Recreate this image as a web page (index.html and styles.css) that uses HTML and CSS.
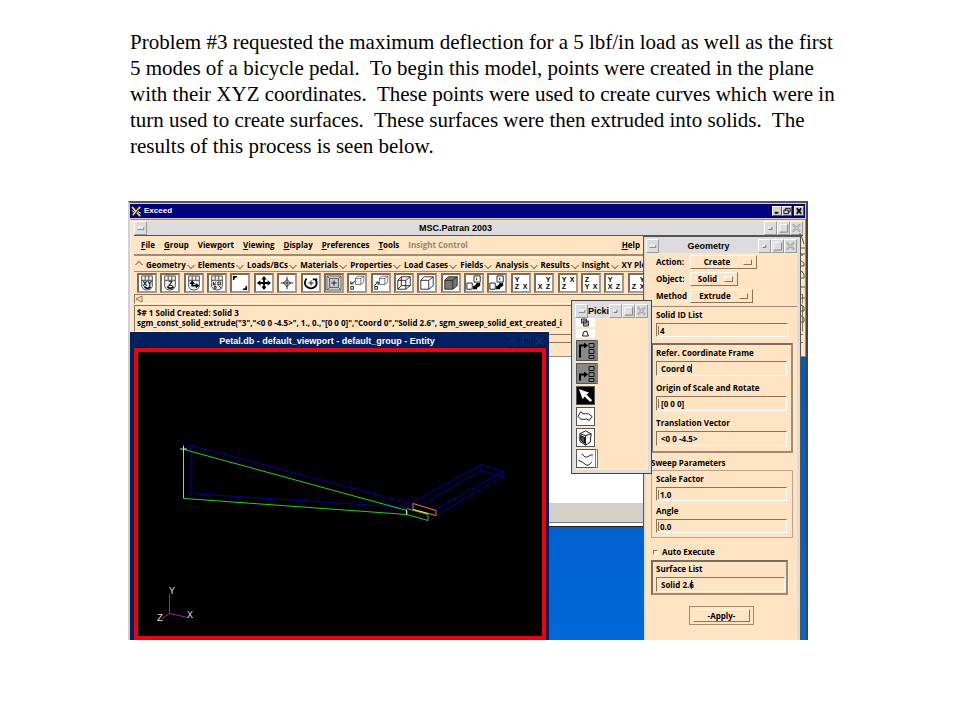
FILE: index.html
```
<!DOCTYPE html>
<html lang="en">
<head>
    <meta charset="UTF-8">
    <meta name="viewport" content="width=device-width, initial-scale=1.0">
    <title>Problem #3</title>
    <link rel="stylesheet" href="styles.css">
</head>
<body>
    <!-- shared icon shapes -->
    <svg class="defs" aria-hidden="true">
        <symbol id="mouse" viewBox="0 0 18 18">
            <path d="M3 1V13Q4 17 9 17T15 13V1ZM3 6H15M7 1V6M11 1V6" fill="#eee" stroke="#444"/>
        </symbol>
        <symbol id="cube" viewBox="0 0 18 18">
            <path d="M2 6H11V16H2ZM2 6L6 2H16L11 6M16 2V12L11 16" fill="none" stroke="#222"/>
        </symbol>
        <symbol id="min" viewBox="0 0 12 12"><path d="M3 7H9V5H3" fill="none" stroke="#fff"/><path d="M3 7.5H9.5V5" fill="none" stroke="#777"/></symbol>
        <symbol id="dot" viewBox="0 0 12 12"><path d="M4 7V5H7" fill="none" stroke="#fff"/><path d="M4 7.5H7.5V5" fill="none" stroke="#666"/></symbol>
        <symbol id="box" viewBox="0 0 12 12"><path d="M2 10V2H10" fill="none" stroke="#fff"/><path d="M2 10.5H10.5V2" fill="none" stroke="#777"/></symbol>
        <symbol id="close" viewBox="0 0 12 12"><path d="M2 2L10 10M10 2L2 10" fill="none" stroke="#777" stroke-width="2"/><path d="M2 2L10 10M10 2L2 10" fill="none" stroke="#fff"/></symbol>
    </svg>

    <p class="intro">Problem #3 requested the maximum deflection for a 5 lbf/in load as well as the first<br>
    5 modes of a bicycle pedal.&nbsp; To begin this model, points were created in the plane<br>
    with their XYZ coordinates.&nbsp; These points were used to create curves which were in<br>
    turn used to create surfaces.&nbsp; These surfaces were then extruded into solids.&nbsp; The<br>
    results of this process is seen below.</p>

    <div class="exceed">
        <div class="exceed-title">
            <svg class="logo" viewBox="0 0 12 12"><path d="M1 1L10 11M10 1L2 10" stroke="#e8d820" stroke-width="2"/><path d="M1 5L4 7M6 5L11 8" stroke="#fff"/><path d="M4 10L8 4" stroke="#111"/></svg>
            <span>Exceed</span>
            <button class="win-btn" aria-label="Minimize"><svg viewBox="0 0 9 8"><path d="M2 6H6" stroke="#000" stroke-width="2"/></svg></button>
            <button class="win-btn" aria-label="Restore"><svg viewBox="0 0 9 8"><path d="M3 3V1H8V5H6M1 3H6V7H1Z" fill="none" stroke="#000"/></svg></button>
            <button class="win-btn last" aria-label="Close"><svg viewBox="0 0 9 8"><path d="M2 1L7 7M7 1L2 7" stroke="#000" stroke-width="2"/></svg></button>
        </div>

        <div class="desktop">
            <div class="window blank"><div class="blank-foot"></div></div>

            <div class="window patran">
                <div class="title-bar">
                    <button aria-label="Window menu"><svg><use href="#min"/></svg></button>
                    <span>MSC.Patran 2003</span>
                    <button aria-label="Iconify"><svg><use href="#dot"/></svg></button>
                    <button aria-label="Maximize"><svg><use href="#box"/></svg></button>
                    <button aria-label="Close"><svg><use href="#close"/></svg></button>
                </div>
                <nav class="menu">
                    <a href="#"><u>F</u>ile</a>
                    <a href="#"><u>G</u>roup</a>
                    <a href="#">View<u>p</u>ort</a>
                    <a href="#"><u>V</u>iewing</a>
                    <a href="#"><u>D</u>isplay</a>
                    <a href="#"><u>P</u>references</a>
                    <a href="#"><u>T</u>ools</a>
                    <a href="#" class="off">Insight Control</a>
                    <a href="#" class="help"><u>H</u>elp</a>
                </nav>
                <div class="tabs">
                    <button class="tab up">Geometry</button>
                    <button class="tab">Elements</button>
                    <button class="tab">Loads/BCs</button>
                    <button class="tab">Materials</button>
                    <button class="tab">Properties</button>
                    <button class="tab">Load Cases</button>
                    <button class="tab">Fields</button>
                    <button class="tab">Analysis</button>
                    <button class="tab">Results</button>
                    <button class="tab">Insight</button>
                    <button class="tab">XY Plot</button>
                </div>
                <div class="tools">
                    <button aria-label="Rotate XY"><svg viewBox="0 0 18 18"><use href="#mouse"/><text x="4" y="12">XY</text><path d="M6 13Q9 17 13 13" class="thick"/></svg></button>
                    <button aria-label="Rotate Z"><svg viewBox="0 0 18 18"><use href="#mouse"/><text x="7" y="12">Z</text><path d="M6 13Q9 17 13 13" class="thick"/></svg></button>
                    <button aria-label="Pan"><svg viewBox="0 0 18 18"><use href="#mouse"/><path d="M7 8V12H12" class="thick"/><path d="M4 10L7 6L10 10ZM11 9L15 12L11 15Z" class="solid"/></svg></button>
                    <button aria-label="Mouse zoom"><svg viewBox="0 0 18 18"><use href="#mouse"/><path d="M5 11L8 8M5 8V11H8M13 8H10V11H13ZM6 13H8V15H6ZM11 12L14 15" class="line"/></svg></button>
                    <button aria-label="Fit view"><svg viewBox="0 0 18 18"><path d="M1 6V1H6L5 3H3V5ZM17 12V17H12L13 15H15V13Z" class="solid"/></svg></button>
                    <button aria-label="Move"><svg viewBox="0 0 18 18"><path d="M9 1L12 5H10V8H13V6L17 9L13 12V10H10V13H12L9 17L6 13H8V10H5V12L1 9L5 6V8H8V5H6Z" class="solid"/></svg></button>
                    <button aria-label="Center"><svg viewBox="0 0 18 18"><path d="M9 2V16M2 9H16M9 5L13 9L9 13L5 9Z" class="line"/></svg></button>
                    <button aria-label="Rotate"><svg viewBox="0 0 18 18"><path d="M4 4Q0 9 4 13Q9 17 14 13Q17 9 14 5M11 5H15V9" class="thick"/><path d="M9 6V12M6 9H12" class="line"/></svg></button>
                    <button aria-label="Zoom box"><svg viewBox="0 0 18 18"><path d="M1 1H17V17H1ZM4 4H14V14H4Z" fill="#ccc" stroke="#555"/><path d="M1 1L4 4M17 1L14 4M1 17L4 14M17 17L14 14" stroke="#555"/><path d="M9 6V12M6 9H12" class="line"/></svg></button>
                    <button aria-label="Zoom out"><svg viewBox="0 0 18 18"><use href="#cube" x="6" y="0" width="12" height="12"/><path d="M7 7L2 10M2 7V10H5M2 13H5V16H2Z" class="line"/></svg></button>
                    <button aria-label="Zoom in"><svg viewBox="0 0 18 18"><use href="#cube" x="6" y="0" width="12" height="12"/><path d="M1 12L6 8M3 8H6V11M2 13H5V16H2Z" class="line"/></svg></button>
                    <button aria-label="Wireframe"><svg viewBox="0 0 18 18"><use href="#cube"/><path d="M6 2V12H16M6 12L2 16" class="line"/></svg></button>
                    <button aria-label="Hidden line"><svg viewBox="0 0 18 18"><use href="#cube"/></svg></button>
                    <button aria-label="Shaded"><svg viewBox="0 0 18 18"><path d="M2 6L6 2H16V12L11 16H2Z" fill="#777"/><use href="#cube"/></svg></button>
                    <button aria-label="Show labels"><svg viewBox="0 0 18 18"><path d="M1 9H7V16H1ZM9 1H16V8H9ZM12 3V6" class="line"/><path d="M8 16V12L10 12L12 9H16V12L13 14L12 16Z" class="solid"/></svg></button>
                    <button aria-label="Hide labels"><svg viewBox="0 0 18 18"><path d="M1 9H7V16H1ZM9 1H16V8H9ZM12 3V6" class="line"/><path d="M8 16V12L10 12L12 9H16V12L13 14L12 16Z" class="solid"/></svg></button>
                    <button aria-label="Front view"><svg viewBox="0 0 18 18"><text x="2" y="8">Y</text><text x="2" y="16">Z</text><text x="11" y="16">X</text></svg></button>
                    <button aria-label="Rear view"><svg viewBox="0 0 18 18"><text x="11" y="8">Y</text><text x="2" y="16">X</text><text x="11" y="16">Z</text></svg></button>
                    <button aria-label="Top view"><svg viewBox="0 0 18 18"><text x="2" y="8">Y</text><text x="11" y="8">X</text><text x="2" y="16">Z</text></svg></button>
                    <button aria-label="Bottom view"><svg viewBox="0 0 18 18"><text x="2" y="8">Z</text><text x="2" y="16">Y</text><text x="11" y="16">X</text></svg></button>
                    <button aria-label="Left view"><svg viewBox="0 0 18 18"><text x="2" y="8">Y</text><text x="2" y="16">X</text><text x="11" y="16">Z</text></svg></button>
                    <button aria-label="Right view"><svg viewBox="0 0 18 18"><text x="11" y="8">Y</text><text x="2" y="16">Z</text><text x="11" y="16">X</text></svg></button>
                </div>
                <div class="scroll"><svg viewBox="0 0 8 8"><path d="M7 1L1 4L7 7Z" fill="#ffe4c4" stroke="#8b7355"/></svg></div>
                <div class="history">$# 1 Solid Created: Solid 3<br>sgm_const_solid_extrude("3","&lt;0 0 -4.5&gt;", 1., 0.,"[0 0 0]","Coord 0","Solid 2.6", sgm_sweep_solid_ext_created_i</div>
                <div class="command"></div>
                <svg class="edge" viewBox="0 0 6 110"><path d="M1 1V16H6M2 3L5 12M0 22H6M1 28L5 31V34H1V38L5 42V46H0M0 55H6M0 66H6M1 72L5 75V79H1V83L5 86V90H0" fill="none" stroke="#5c5246"/></svg>
            </div>

            <div class="window viewport">
                <div class="title-bar dark">
                    <button aria-label="Window menu"></button>
                    <span>Petal.db - default_viewport - default_group - Entity</span>
                    <button aria-label="Iconify"><svg><use href="#dot"/></svg></button>
                    <button aria-label="Maximize"><svg><use href="#box"/></svg></button>
                    <button aria-label="Close"><svg><use href="#close"/></svg></button>
                </div>
                <svg class="model" viewBox="138 352 404 283" fill="none">
                    <g stroke="#0000a8">
                        <path d="M184 448L191 445L410 503M191 445V493L184 498M191 493L407 507"/>
                        <path d="M410 503L481 464L503 471V476L436 515M413 509L481 470L503 476M481 464V470M503 471L433 510M407 507L413 503"/>
                    </g>
                    <path d="M183.500 448V498" stroke="#c8c060"/>
                    <path d="M184 449L407 510V514L184 498M407 514L428 520V514L407 508" stroke="#20d020"/>
                    <path d="M413 503L436 510V515L413 509Z" stroke="#f08030"/>
                    <path d="M413 509L428 513" stroke="#e8e020"/>
                    <path d="M180 448.500H187M183.500 445V452M406.500 509V514" stroke="#a8e8e8"/>
                    <path d="M169.500 593V613L188 617M169.500 613L162 618" stroke="#a020a0"/>
                    <g class="axis">
                        <text x="169" y="593">Y</text>
                        <text x="187" y="617">X</text>
                        <text x="157" y="620">Z</text>
                    </g>
                </svg>
            </div>

            <form class="window geometry">
                <div class="title-bar">
                    <button type="button" aria-label="Window menu"><svg><use href="#min"/></svg></button>
                    <span>Geometry</span>
                    <button type="button" aria-label="Iconify"><svg><use href="#dot"/></svg></button>
                    <button type="button" aria-label="Maximize"><svg><use href="#box"/></svg></button>
                    <button type="button" aria-label="Close"><svg><use href="#close"/></svg></button>
                </div>
                <div class="options">
                    <label for="action">Action:</label>
                    <div class="option create"><select id="action"><option>Create</option></select></div>
                    <label for="object">Object:</label>
                    <div class="option solid-opt"><select id="object"><option>Solid</option></select></div>
                    <label for="method">Method</label>
                    <div class="option extrude"><select id="method"><option>Extrude</option></select></div>
                </div>
                <div class="field id-list">
                    <label for="solid-id">Solid ID List</label>
                    <input type="text" id="solid-id" class="caret" value="4">
                </div>
                <div class="frame">
                    <div class="field">
                        <label for="coord">Refer. Coordinate Frame</label>
                        <input type="text" id="coord" class="inset caret-end" value="Coord 0">
                    </div>
                    <div class="field">
                        <label for="origin">Origin of Scale and Rotate</label>
                        <input type="text" id="origin" class="inset caret" value="[0 0 0]">
                    </div>
                    <div class="field">
                        <label for="vector">Translation Vector</label>
                        <input type="text" id="vector" class="inset" value="&lt;0 0 -4.5&gt;">
                    </div>
                </div>
                <div class="heading">Sweep Parameters</div>
                <div class="frame thin">
                    <div class="field">
                        <label for="scale">Scale Factor</label>
                        <input type="text" id="scale" class="caret" value="1.0">
                    </div>
                    <div class="field">
                        <label for="angle">Angle</label>
                        <input type="text" id="angle" class="caret" value="0.0">
                    </div>
                </div>
                <label class="check"><input type="checkbox">Auto Execute</label>
                <div class="frame surface">
                    <div class="field">
                        <label for="surface">Surface List</label>
                        <input type="text" id="surface" class="inset caret-end" value="Solid 2.6">
                    </div>
                </div>
                <div class="apply"><button type="button">-Apply-</button></div>
            </form>

            <div class="window picking">
                <div class="title-bar">
                    <button aria-label="Window menu"><svg><use href="#min"/></svg></button>
                    <span>Picki</span>
                    <button aria-label="Iconify"><svg><use href="#dot"/></svg></button>
                    <button aria-label="Maximize"><svg><use href="#box"/></svg></button>
                    <button aria-label="Close"><svg><use href="#close"/></svg></button>
                </div>
                <div class="picks">
                    <button class="small" aria-label="Entire"><svg viewBox="0 0 18 9"><path d="M5 1H10V5H5ZM7 3H12V8H7Z" fill="#aaa" stroke="#333"/></svg></button>
                    <button class="small" aria-label="Polygon"><svg viewBox="0 0 18 9"><path d="M6 7L7 3L10 2L12 7Z" class="line"/></svg></button>
                    <button class="filter" aria-label="Replace"><svg viewBox="0 0 18 18"><path d="M3 16V4H8" class="thick"/><path d="M7 1L11 4L7 7Z" class="solid"/><path d="M12 2H17V6H12ZM12 8H17V12H12ZM12 14H17V17H12Z" class="line"/></svg></button>
                    <button class="filter" aria-label="Append"><svg viewBox="0 0 18 18"><path d="M3 16V10H8" class="thick"/><path d="M7 7L11 10L7 13Z" class="solid"/><path d="M12 2H17V6H12ZM12 8H17V12H12ZM12 14H17V17H12Z" class="line"/></svg></button>
                    <button class="arrow" aria-label="Select"><svg viewBox="0 0 18 18"><path d="M2 2L13 6L10 8L16 14L14 16L8 10L6 13Z" fill="#fff"/></svg></button>
                    <button aria-label="Surface"><svg viewBox="0 0 18 18"><path d="M4 4Q6 7 9 6T16 9L13 13Q10 11 7 12T1 9Z" class="line"/></svg></button>
                    <button aria-label="Solid face"><svg viewBox="0 0 18 18"><path d="M3 5L9 2L15 5L14 14L9 17L3 13ZM3 5L9 7L15 5M9 7V17" class="line"/><path d="M4 7L8 9V15L4 12Z" fill="#555" stroke="#000"/></svg></button>
                    <button class="curve" aria-label="Curve"><svg viewBox="0 0 18 18"><path d="M5 4Q8 9 11 7T16 5M1 11Q5 12 8 15T15 13" class="line"/><path d="M5 4L1 11M16 5L15 13" stroke="#999" stroke-dasharray="1 1"/></svg></button>
                </div>
            </div>
        </div>
    </div>
</body>
</html>
```

FILE: styles.css
```
* {
    box-sizing: border-box;
}

body {
    margin: 0;
    padding: 29px 152px 0 128px;
    background-color: #fff;
    color: #000;
}

.defs {
    display: none;
}

.intro {
    margin: 0 -60px 42px 2px;
    font-family: "Liberation Serif", "Times New Roman", serif;
    font-size: 21px;
    line-height: 26px;
}

button, input, select {
    margin: 0;
    padding: 0;
    border: none;
    border-radius: 0;
    background: none;
    color: inherit;
    font: inherit;
}

button svg {
    display: block;
    width: 100%;
    height: 100%;
}

/* Exceed frame */
.exceed {
    display: flex;
    flex-direction: column;
    height: 439px;
    border-top: 2px solid #555;
    border-left: 2px solid #d4d0c8;
    border-right: 2px solid #444;
    background-color: #d4d0c8;
    font-family: "Open Sans", "Noto Sans", sans-serif;
    font-size: 8px;
    font-weight: bold;
    line-height: 10px;
    overflow: hidden;
}

.exceed-title {
    display: flex;
    align-items: center;
    height: 14px;
    margin: 1px 1px 1px 0;
    padding: 0 1px;
    background-color: #000080;
    color: #fff;
    font-family: "Liberation Sans", Arial, sans-serif;
}

.exceed-title span {
    flex: 1;
    padding-left: 2px;
}

.logo {
    width: 11px;
    height: 11px;
}

.win-btn {
    width: 10px;
    height: 10px;
    border: 1px solid #fff;
    border-right-color: #555;
    border-bottom-color: #555;
    background-color: #d4d0c8;
}

.win-btn.last {
    margin-left: 2px;
}

.desktop {
    position: relative;
    flex: 1;
    background: linear-gradient(#0050b8, #0068d8);
    overflow: hidden;
}

.window {
    position: absolute;
    display: flex;
    flex-direction: column;
    background-color: #ffe4c4;
}

.title-bar {
    display: flex;
    height: 14px;
    background-color: #dcdcdc;
    font-family: "Liberation Sans", Arial, sans-serif;
    font-size: 9px;
    line-height: 14px;
    flex-shrink: 0;
}

.title-bar span {
    flex: 1;
    text-align: center;
    white-space: nowrap;
    overflow: hidden;
}

.title-bar button {
    width: 13px;
    border: 1px solid;
    border-color: #fff #999 #999 #fff;
}

.title-bar.dark {
    background-color: #002060;
    color: #fff;
}

.title-bar.dark button {
    border-color: #002868 #001848 #001848 #002868;
}

.title-bar.dark svg {
    opacity: 0.1;
}

/* white window behind everything */
.blank {
    top: 130px;
    left: 380px;
    right: 160px;
    height: 178px;
    justify-content: flex-end;
    background-color: #fff;
    border-bottom: 1px solid #222;
}

.blank-foot {
    height: 20px;
    margin-bottom: 3px;
    background-color: #d4d0c8;
    border-bottom: 1px solid #777;
}

/* main window */
.patran {
    top: 0;
    left: 0;
    right: 0;
    height: 138px;
    padding: 1px 2px 0 3px;
    border: 1px solid #8c8c8c;
    border-left-color: #eee;
}

.menu {
    display: flex;
    align-items: center;
    gap: 9px;
    height: 21px;
    padding: 0 163px 0 7px;
    border-top: 1px solid #555;
    border-bottom: 2px solid #a08c74;
}

.menu a {
    color: #000;
    text-decoration: none;
    white-space: nowrap;
}

.menu .off {
    color: #94866f;
}

.menu .help {
    margin-left: auto;
}

.tabs {
    display: flex;
    align-items: center;
    justify-content: space-between;
    height: 15px;
    margin-top: 1px;
    padding: 0 153px 0 2px;
    border-top: 1px solid #fff;
    border-bottom: 1px solid #a08c74;
}

.tab {
    display: flex;
    align-items: center;
    gap: 4px;
    white-space: nowrap;
}

.tab::before {
    content: "";
    width: 4px;
    height: 4px;
    border: 1px solid;
    border-color: transparent #8b7355 #8b7355 transparent;
    transform: rotate(45deg);
}

.tab.up::before {
    border-color: #8b7355 transparent transparent #8b7355;
}

.tools {
    display: grid;
    grid-template-columns: repeat(22, 1fr);
    height: 22px;
    padding: 1px 152px 1px 3px;
}

.tools button {
    width: 20px;
    height: 20px;
    border: 2px solid;
    border-color: #776d60 #a99a86 #a99a86 #776d60;
    background-color: #fff;
}

.tools text {
    font-family: "Liberation Sans", Arial, sans-serif;
    font-size: 8px;
    font-weight: bold;
}

.line {
    fill: none;
    stroke: #111;
}

.thick {
    fill: none;
    stroke: #000;
    stroke-width: 2;
}

.solid {
    fill: #000;
}

.scroll {
    height: 10px;
    border: 1px solid #8b7355;
    border-bottom-color: #fff;
}

.scroll svg {
    display: block;
    width: 8px;
    height: 8px;
}

.history {
    height: 27px;
    margin-top: 1px;
    padding: 2px;
    border: 1px solid #8b7355;
    border-bottom-color: #fff;
    line-height: 10px;
    white-space: nowrap;
    overflow: hidden;
}

.command {
    height: 9px;
    margin-top: 2px;
    border-top: 1px solid #8b7355;
    border-bottom: 1px solid #8b7355;
}

.edge {
    position: absolute;
    top: 12px;
    right: 0;
    width: 6px;
    height: 110px;
}

/* model viewport */
.viewport {
    top: 113px;
    left: 0;
    width: 419px;
    bottom: 0;
    padding: 2px 3px 0 4px;
    background-color: #002060;
}

.model {
    flex: 1;
    min-height: 0;
    border: 4px solid #f00008;
    background-color: #000;
}

.axis text {
    fill: #ddd;
    font-family: "Liberation Mono", "Courier New", monospace;
    font-size: 10px;
    font-weight: normal;
}

/* geometry form */
.geometry {
    top: 17px;
    right: 5px;
    width: 158px;
    bottom: 0;
    padding: 2px 3px 0 2px;
    border: 1px solid #555;
    border-bottom: none;
    box-shadow: inset 2px 0 #dcdcdc, inset -3px 0 #dcdcdc, inset 0 2px #dcdcdc;
}

.options {
    display: grid;
    grid-template-columns: 34px 1fr;
    row-gap: 3px;
    padding: 2px 0 3px 10px;
    border-bottom: 1px solid #a08c74;
}

.options label {
    line-height: 14px;
}

.option {
    display: flex;
    align-items: center;
    height: 14px;
    border: 1px solid;
    border-color: #fff #8b7355 #8b7355 #fff;
    padding-right: 4px;
}

.option::after {
    content: "";
    width: 7px;
    height: 4px;
    border: 1px solid;
    border-color: #fff #8b7355 #8b7355 #fff;
}

.option select {
    flex: 1;
    min-width: 0;
    appearance: none;
    text-align: center;
}

.create {
    width: 67px;
}

.solid-opt {
    width: 48px;
}

.extrude {
    width: 63px;
}

.field {
    display: flex;
    flex-direction: column;
    gap: 3px;
}

.field input {
    width: 100%;
    height: 14px;
    padding-left: 3px;
    border: 1px solid;
    border-color: #8b7355 #fff #fff #8b7355;
}

.field .inset {
    height: 15px;
    padding-left: 4px;
}

.field .caret {
    background: linear-gradient(#8b7355, #8b7355) 1px 2px / 1px 9px no-repeat;
}

.field .caret-end {
    background: linear-gradient(#333, #333) 34px 2px / 1px 9px no-repeat;
}

.id-list {
    margin: 3px 9px 6px 10px;
}

.frame {
    display: flex;
    flex-direction: column;
    gap: 7px;
    margin: 0 4px 0 5px;
    padding: 3px 4px 5px 3px;
    border: 2px solid;
    border-color: #776d60 #a08c74 #a08c74 #776d60;
}

.heading {
    margin: 5px 0 2px 5px;
}

.frame.thin {
    gap: 5px;
    padding: 3px 5px 4px 4px;
    border: 1px solid #b8a48a;
}

.check {
    display: flex;
    align-items: center;
    gap: 4px;
    margin: 9px 0 3px 7px;
}

.check input {
    width: 5px;
    height: 5px;
    appearance: none;
    border: 1px solid;
    border-color: #8b7355 #fff #fff #8b7355;
}

.frame.surface {
    margin-right: 9px;
    padding: 2px 1px 1px 3px;
}

.apply {
    align-self: center;
    margin-top: 11px;
    padding: 2px 3px;
    border: 1px solid #a08c74;
}

.apply button {
    width: 57px;
    height: 13px;
    border: 1px solid;
    border-color: #fff #8b7355 #8b7355 #fff;
}

/* picking palette */
.picking {
    top: 81px;
    right: 154px;
    width: 81px;
    height: 174px;
    border: 1px solid #444;
    padding: 3px;
    box-shadow: inset 0 0 0 3px #dcdcdc;
}

.picks {
    display: flex;
    flex-direction: column;
    align-items: flex-start;
    gap: 2px;
    padding-left: 1px;
}

.picks button {
    width: 19px;
    height: 19px;
    border: 1px solid #555;
    background-color: #fff;
}

.picks .small {
    height: 9px;
    border: none;
}

.picks .filter {
    width: 22px;
    height: 21px;
    border-right: 3px double #8b7355;
    background-color: #888;
}

.picks .curve {
    width: 22px;
    border-right: 3px double #8b7355;
}

.picks .arrow {
    background-color: #000;
}
```
